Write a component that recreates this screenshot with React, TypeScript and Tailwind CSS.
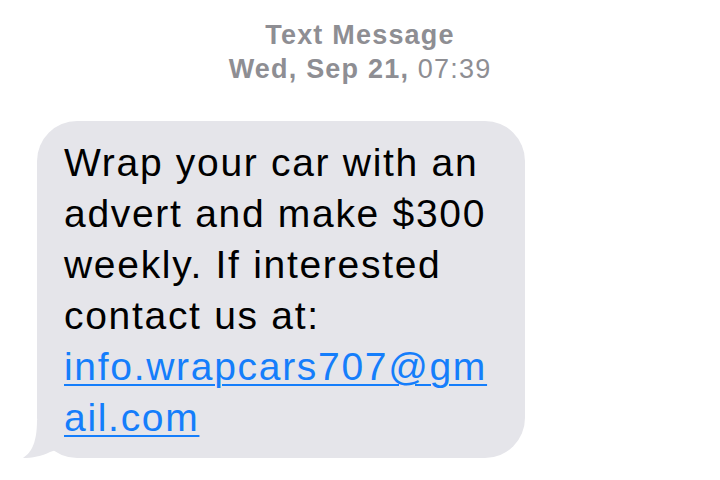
export default function App() {
  const lines = [
    "Wrap your car with an",
    "advert and make $300",
    "weekly. If interested",
    "contact us at:",
  ];

  return (
    <div className="w-[720px] h-[480px] bg-white overflow-hidden font-['Liberation_Sans',Arial,sans-serif]">
      <div className="flex flex-col items-center pt-[18px] text-[#8e8e93] text-[27px] leading-[34px] tracking-[1.2px]">
        <div className="font-bold">Text Message</div>
        <div>
          <span className="font-bold">Wed, Sep 21,</span> 07:39
        </div>
      </div>

      <div className="relative ml-[37px] mt-[35px] w-[488px] rounded-[40px] bg-[#e5e5ea] pl-[27px] pt-[16px] pb-[15px] text-[39px] leading-[51px] tracking-[1.7px] text-black">
        {lines.map((l) => (
          <div key={l} className="whitespace-nowrap">
            {l}
          </div>
        ))}
        <a
          href="#"
          className="text-[#157efb] underline decoration-2 underline-offset-[4px]"
        >
          info.wrapcars707@gm
          <br />
          ail.com
        </a>
        <svg
          className="absolute left-[-15px] bottom-0"
          width="40"
          height="40"
          viewBox="0 0 40 40"
        >
          <path
            d="M15 2 C15 24 10 34 1 40 C10 40 20 38 28 34 L40 30 L40 0 Z"
            fill="#e5e5ea"
          />
        </svg>
      </div>
    </div>
  );
}
